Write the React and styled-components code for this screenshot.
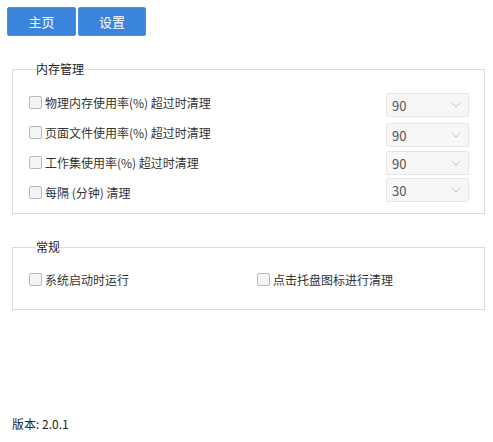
import React from "react";
import styled, { createGlobalStyle } from "styled-components";

const Global = createGlobalStyle`
  html, body { margin: 0; padding: 0; background: #fff; }
  body { font-family: "Noto Sans CJK SC", "Noto Sans", sans-serif; color: #333; }
  * { box-sizing: border-box; }
`;

const Page = styled.div`
  min-height: 442px;
  display: flex;
  flex-direction: column;
  padding: 7px 8px 10px 12px;
`;

const Toolbar = styled.div`
  display: flex;
  gap: 2px;
  margin-left: -5px;
`;

const NavButton = styled.button`
  width: ${(p) => p.$w}px;
  height: 29px;
  border: 1px solid #4a90e2;
  border-radius: 2px;
  background: #3b84dc;
  color: #fff;
  font-family: inherit;
  font-size: 13px;
  padding: 0;
  cursor: pointer;
`;

const Group = styled.fieldset`
  margin: ${(p) => p.$top}px 0 0 0;
  padding: ${(p) => p.$pt}px 15px ${(p) => p.$pb}px 16px;
  border: 1px solid #dadada;
  min-width: 0;
`;

const Legend = styled.legend`
  font-size: 12px;
  line-height: 16px;
  padding: 0;
  margin-left: 7px;
  color: #222;
`;

const MemGrid = styled.div`
  display: flex;
  justify-content: space-between;
  align-items: flex-start;
`;

const Column = styled.div`
  display: flex;
  flex-direction: column;
`;

const Row = styled.label`
  height: 30px;
  display: flex;
  align-items: center;
  font-size: 12px;
  color: #333;
  white-space: nowrap;
`;

const Box = styled.span`
  width: 13px;
  height: 13px;
  border: 1px solid #b8b8b8;
  border-radius: 2px;
  background: #f4f4f4;
  margin-right: 3px;
  flex: none;
`;

const Select = styled.div`
  width: 83px;
  height: 24px;
  margin-top: ${(p) => p.$offset}px;
  border: 1px solid #e6e6e6;
  border-radius: 2px;
  background: #f7f7f7;
  display: flex;
  align-items: center;
  justify-content: space-between;
  padding: 0 7px 0 5px;
  font-size: 13px;
  color: #555;
`;

const Chevron = () => (
  <svg width="10" height="6" viewBox="0 0 10 6">
    <path d="M0.5 0.5 L5 5 L9.5 0.5" fill="none" stroke="#c4c4c4" strokeWidth="1" />
  </svg>
);

const GeneralGrid = styled.div`
  display: grid;
  grid-template-columns: 228px 1fr;
`;

const Version = styled.div`
  margin-top: auto;
  font-size: 12px;
  line-height: 16px;
  color: #222;
`;

const mem = [
  { label: "物理内存使用率(%) 超过时清理", value: "90", offset: 6 },
  { label: "页面文件使用率(%) 超过时清理", value: "90", offset: 6 },
  { label: "工作集使用率(%) 超过时清理", value: "90", offset: 4 },
  { label: "每隔 (分钟) 清理", value: "30", offset: 3 },
];

export default function App() {
  return (
    <>
      <Global />
      <Page>
        <Toolbar>
          <NavButton $w={69}>主页</NavButton>
          <NavButton $w={68}>设置</NavButton>
        </Toolbar>
        <Group $top={25} $pt={10} $pb={6}>
          <Legend>内存管理</Legend>
          <MemGrid>
            <Column>
              {mem.map((m) => (
                <Row key={m.label}>
                  <Box />
                  {m.label}
                </Row>
              ))}
            </Column>
            <Column>
              {mem.map((m) => (
                <Select key={m.label} $offset={m.offset}>
                  {m.value}
                  <Chevron />
                </Select>
              ))}
            </Column>
          </MemGrid>
        </Group>
        <Group $top={25} $pt={9} $pb={15}>
          <Legend>常规</Legend>
          <GeneralGrid>
            <Row>
              <Box />
              系统启动时运行
            </Row>
            <Row>
              <Box />
              点击托盘图标进行清理
            </Row>
          </GeneralGrid>
        </Group>
        <Version>版本: 2.0.1</Version>
      </Page>
    </>
  );
}
